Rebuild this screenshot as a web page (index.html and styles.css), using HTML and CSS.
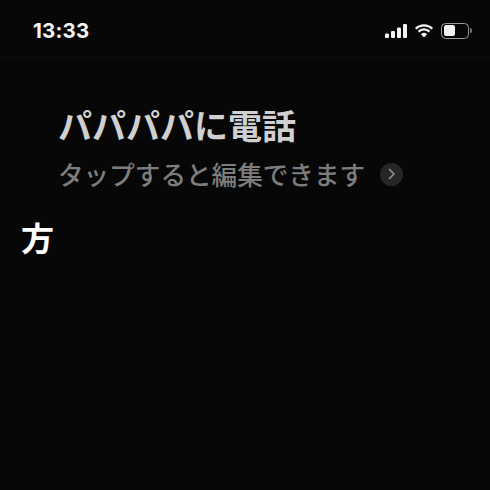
FILE: index.html
```html
<!DOCTYPE html>
<html lang="ja">
<head>
<meta charset="utf-8">
<title>Siri</title>
<link rel="stylesheet" href="styles.css">
</head>
<body>
<div class="screen">
  <header class="status">
    <span class="time">13:33</span>
    <div class="indicators">
      <svg class="signal" width="23" height="14" viewBox="0 0 23 14"><rect x="0" y="9.5" width="4" height="4.5" rx="1"/><rect x="6" y="7" width="4" height="7" rx="1"/><rect x="12" y="3.5" width="4" height="10.500" rx="1"/><rect x="18" y="0" width="4" height="14" rx="1"/></svg>
      <svg class="wifi" width="18" height="14" viewBox="0 0 18 14"><path d="M9 13.500 6 10.200a4.300 4.300 0 0 1 6 0Z"/><path d="M4.300 8.400 2.700 6.700a9 9 0 0 1 12.600 0l-1.600 1.700a6.700 6.700 0 0 0-9.400 0Z"/><path d="M1.500 5.500 0 3.800a13 13 0 0 1 18 0l-1.500 1.700a10.800 10.800 0 0 0-15 0Z"/></svg>
      <div class="battery"><div class="battery-body"><div class="battery-level"></div></div><div class="battery-cap"></div></div>
    </div>
  </header>
  <main class="content">
    <h1 class="title">パパパパに電話</h1>
    <div class="edit-row">
      <span class="subtitle">タップすると編集できます</span>
      <span class="chevron-badge"><svg width="8" height="12" viewBox="0 0 8 12"><path d="M1.500 1.500 6 6l-4.500 4.500" fill="none" stroke="#8e8e8e" stroke-width="1.700" stroke-linecap="round" stroke-linejoin="round"/></svg></span>
    </div>
  </main>
  <p class="answer">方</p>
</div>
</body>
</html>
```
FILE: styles.css
```css
* { box-sizing: border-box; margin: 0; padding: 0; }
html, body { width: 490px; height: 490px; background: #070707; overflow: hidden; }
body { font-family: "Noto Sans CJK JP", "Inter", sans-serif; }
.screen { width: 490px; height: 490px; display: flex; flex-direction: column; }
.status {
  height: 58px;
  border-bottom: 1px solid #0e0e0e;
  display: flex;
  align-items: flex-start;
  justify-content: space-between;
  padding: 20px 18px 0 33px;
}
.time { font-family: "Inter", sans-serif; font-weight: 700; font-size: 20.500px; line-height: 21px; color: #f5f5f5; letter-spacing: 0.2px; }
.indicators { display: flex; align-items: center; gap: 6px; height: 21px; }
.signal, .wifi { fill: #f2f2f2; }
.signal { margin-right: 1px; }
.battery { display: flex; align-items: center; gap: 1px; margin-left: 2px; }
.battery-body { width: 28px; height: 16px; border: 1.500px solid #9a9a9a; border-radius: 4.500px; padding: 1.500px; }
.battery-level { width: 11px; height: 100%; background: #f2f2f2; border-radius: 2px; }
.battery-cap { width: 2px; height: 5px; background: #777; border-radius: 0 2px 2px 0; }
.content { padding: 45px 0 0 58px; }
.title { font-size: 34px; line-height: 44px; font-weight: 700; color: #d0d0d0; }
.edit-row { display: flex; align-items: center; margin-top: 9px; height: 36px; }
.subtitle { font-size: 25.600px; line-height: 36px; font-weight: 500; color: #7d7d7d; }
.chevron-badge { width: 23px; height: 23px; border-radius: 50%; background: #262626; margin-left: 15px; display: flex; align-items: center; justify-content: center; }
.answer { padding: 23px 0 0 21px; font-size: 33px; line-height: 44px; font-weight: 700; color: #fff; }
```
